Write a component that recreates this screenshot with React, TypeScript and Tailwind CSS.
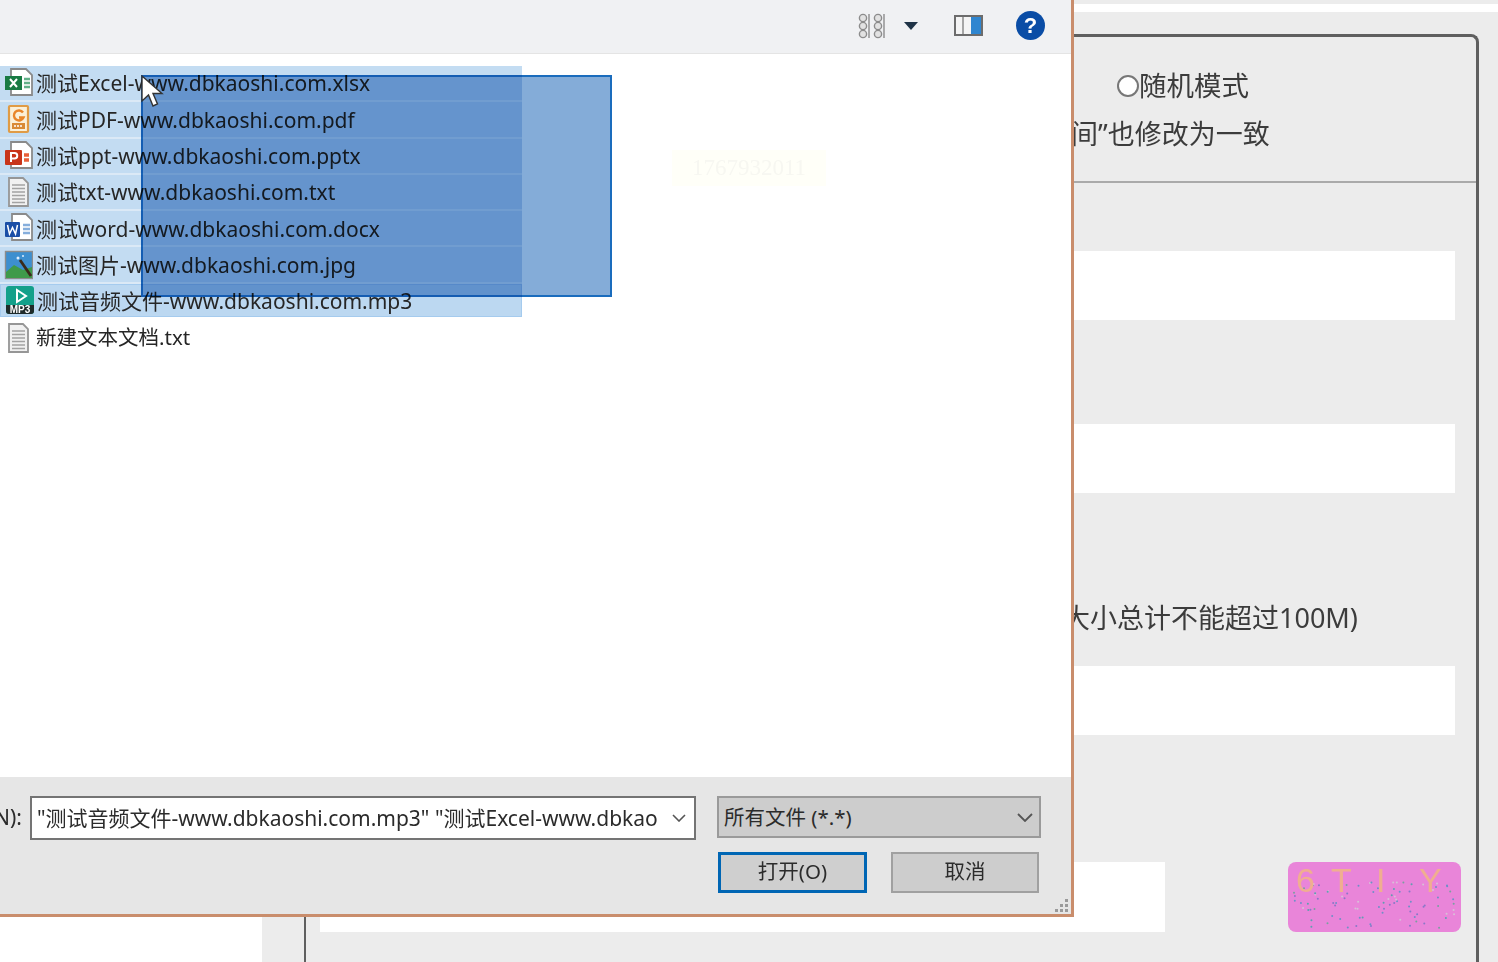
import React from "react";

const FONT = { fontFamily: '"Noto Sans", "Noto Sans CJK SC", sans-serif' };

function ExcelIcon() {
  return (
    <svg width="30" height="30" viewBox="0 0 30 30">
      <path d="M8 1h15l6 6v20h-21z" fill="#fff" stroke="#8a8a8a" strokeWidth="1.8" />
      <path d="M21 11h6M21 15h6M21 19h6" stroke="#62b089" strokeWidth="2.6" />
      <rect x="2" y="8" width="17" height="14" fill="#187a43" />
      <path d="M7 11l7 8M14 11l-7 8" stroke="#fff" strokeWidth="2" />
    </svg>
  );
}
function PdfIcon() {
  return (
    <svg width="30" height="30" viewBox="0 0 30 30">
      <rect x="6" y="2" width="19" height="26" rx="1" fill="#fbf0d8" stroke="#e09b45" strokeWidth="2.2" />
      <path d="M20 8.500a5 5 0 1 0 .5 5h-4.500" fill="none" stroke="#e9862a" strokeWidth="2.4" />
      <rect x="9" y="19" width="13" height="6" fill="#d98a35" />
      <path d="M11 22h9" stroke="#fff" strokeWidth="1.4" strokeDasharray="2 1" />
    </svg>
  );
}
function PptIcon() {
  return (
    <svg width="30" height="30" viewBox="0 0 30 30">
      <path d="M8 1h15l6 6v20h-21z" fill="#fff" stroke="#8a8a8a" strokeWidth="1.8" />
      <path d="M21 14h5M21 19h5" stroke="#e8603a" strokeWidth="3.4" />
      <rect x="2" y="9" width="17" height="15" rx="1" fill="#c8351a" />
      <path d="M8 21v-9h3.500a2.600 2.600 0 0 1 0 5.500h-3.500" fill="none" stroke="#fff" strokeWidth="2" />
    </svg>
  );
}
function TxtIcon() {
  return (
    <svg width="30" height="30" viewBox="0 0 30 30">
      <path d="M6 1h14l5 5v23h-19z" fill="#f1f1f1" stroke="#969696" strokeWidth="1.8" />
      <path d="M9 8h13M9 11.500h13M9 15h13M9 18.500h13M9 22h13M9 25.500h13" stroke="#a3a3a3" strokeWidth="1.5" />
    </svg>
  );
}
function WordIcon() {
  return (
    <svg width="30" height="30" viewBox="0 0 30 30">
      <path d="M9 1h14l6 6v20h-20z" fill="#fff" stroke="#8a8a8a" strokeWidth="1.8" />
      <path d="M20 12h7M20 16h7M20 20h7" stroke="#86aedc" strokeWidth="2.6" />
      <rect x="2" y="9" width="15" height="15" rx="1" fill="#1a4ea6" />
      <path d="M4.500 12l2 9 3-6.500 3 6.500 2-9" fill="none" stroke="#fff" strokeWidth="1.5" />
    </svg>
  );
}
function ImageIcon() {
  return (
    <svg width="30" height="30" viewBox="0 0 30 30">
      <rect x="2.500" y="1.500" width="27" height="27" fill="#3d8fcf" stroke="#8c8c8c" strokeWidth="1.4" />
      <path d="M3 22l8-7 9 5 9-3v11h-26z" fill="#3f9a4a" />
      <path d="M17 10l11 16" stroke="#3a2a1a" strokeWidth="2.800" />
      <circle cx="15" cy="8" r="1.500" fill="#dfefff" />
      <circle cx="20" cy="6" r="1" fill="#dfefff" />
    </svg>
  );
}
function Mp3Icon() {
  return (
    <svg width="30" height="30" viewBox="0 0 30 30">
      <rect x="2" y="1" width="28" height="28" rx="3" fill="#13a08a" />
      <path d="M13 5l9 6-9 6z" fill="none" stroke="#fff" strokeWidth="2" />
      <path d="M2 20h28v6a3 3 0 0 1-3 3h-22a3 3 0 0 1-3-3z" fill="#1f2a2a" />
      <text x="16" y="28" textAnchor="middle" fontSize="10" fontWeight="700" fill="#fff" fontFamily="Liberation Sans">MP3</text>
    </svg>
  );
}

const files: { name: string; icon: React.ReactNode }[] = [
  { name: "测试Excel-www.dbkaoshi.com.xlsx", icon: <ExcelIcon /> },
  { name: "测试PDF-www.dbkaoshi.com.pdf", icon: <PdfIcon /> },
  { name: "测试ppt-www.dbkaoshi.com.pptx", icon: <PptIcon /> },
  { name: "测试txt-www.dbkaoshi.com.txt", icon: <TxtIcon /> },
  { name: "测试word-www.dbkaoshi.com.docx", icon: <WordIcon /> },
  { name: "测试图片-www.dbkaoshi.com.jpg", icon: <ImageIcon /> },
  { name: "测试音频文件-www.dbkaoshi.com.mp3", icon: <Mp3Icon /> },
];

const dots: { x: number; y: number; c: string }[] = [];
let seed = 17;
const rnd = () => {
  seed = (seed * 16807) % 2147483647;
  return seed / 2147483647;
};
const dotColors = ["#6f8fc8", "#5f9fb0", "#8a78c8", "#d8c0d8", "#7aa0a0"];
for (let i = 0; i < 90; i++) {
  dots.push({ x: 6 + rnd() * 162, y: 20 + rnd() * 46, c: dotColors[Math.floor(rnd() * 5)] });
}

function Captcha() {
  return (
    <div className="relative w-[173px] h-[70px] -mr-[6px] rounded-lg bg-[#e985d9] overflow-hidden shrink-0">
      <svg className="absolute inset-0" width="173" height="70" viewBox="0 0 173 70">
        {dots.map((d, i) => (
          <circle key={i} cx={d.x} cy={d.y} r="1" fill={d.c} />
        ))}
      </svg>
      <div className="absolute inset-x-0 top-0 flex text-[34px] leading-[36px] text-[#f0ae90]" style={{ fontFamily: '"Liberation Sans", sans-serif' }}>
        <span className="ml-[8px] w-[33px]">6</span>
        <span className="ml-[2px] w-[45px]">T</span>
        <span className="w-[43px]">I</span>
        <span>Y</span>
      </div>
    </div>
  );
}

function Dialog() {
  return (
    <div className="absolute left-0 top-0 w-[1074px] h-[917px] bg-white border-r-[3px] border-b-[3px] border-[#c98d6c] flex flex-col">
      <div className="h-[54px] bg-[#f0f1f3] border-b border-[#e4e4e4] flex items-center justify-end pr-[26px] pb-[2px] shrink-0">
        <svg width="29" height="26" viewBox="0 0 29 26" className="mr-[17px]">
          <g fill="#e2e2e2" stroke="#8c8c8c" strokeWidth="1.400">
            <circle cx="5" cy="5" r="3.600" />
            <circle cx="5" cy="13" r="3.600" />
            <circle cx="5" cy="21" r="3.600" />
            <circle cx="20" cy="5" r="3.600" />
            <circle cx="20" cy="13" r="3.600" />
            <circle cx="20" cy="21" r="3.600" />
            <path d="M11 1v24M26 1v24" />
          </g>
        </svg>
        <svg width="14" height="8" viewBox="0 0 14 8" className="mr-[36px]">
          <path d="M0 0h14l-7 8z" fill="#1f3346" />
        </svg>
        <svg width="29" height="21" viewBox="0 0 29 21" className="mr-[33px]">
          <rect x="1" y="1" width="27" height="19" fill="#f4f4f4" stroke="#6c6c6c" strokeWidth="2" />
          <rect x="17" y="2" width="10" height="17" fill="#2f86d0" />
          <rect x="8" y="2" width="2" height="17" fill="#a5a5a5" />
        </svg>
        <div className="w-[29px] h-[29px] rounded-full bg-[#0a4da6] flex items-center justify-center text-white text-[22px] font-bold leading-none" style={{ fontFamily: '"Liberation Sans", sans-serif' }}>
          ?
        </div>
      </div>

      <div className="relative flex-1 pt-[12px] text-[21px] text-[#262626]" style={FONT}>
        <div className="flex flex-col">
          {files.map((f, i) => (
            <div
              key={f.name}
              className={
                i === files.length - 1
                  ? "w-[522px] h-[33px] mb-[3px] bg-[#bcd8f1] border border-[#a5cbee] flex items-center shrink-0"
                  : "w-[522px] h-[36.3px] bg-[#c3dcf2] border-b-2 border-[#dbe9f6] flex items-center shrink-0"
              }
            >
              <span className="w-[36px] pl-[3px] flex items-center shrink-0">{f.icon}</span>
              <span className="whitespace-nowrap pt-[2px]">{f.name}</span>
            </div>
          ))}
          <div className="w-[522px] h-[36px] flex items-center">
            <span className="w-[36px] pl-[3px] flex items-center shrink-0">
              <TxtIcon />
            </span>
            <span className="whitespace-nowrap text-[20.5px]">新建文本文档.txt</span>
          </div>
        </div>

        <div className="absolute left-[672px] top-[96px] w-[154px] h-[36px] bg-[#fffff8] flex items-center justify-center text-[23px] text-[#f7f7f1]" style={{ fontFamily: '"Liberation Serif", serif' }}>
          1767932011
        </div>

        <div className="absolute left-[141px] top-[21px] w-[471px] h-[222px] bg-[#84acd8] mix-blend-multiply border-2 border-[#1a6cbd]" />

        <svg className="absolute left-[140px] top-[21px]" width="26" height="36" viewBox="0 0 26 36">
          <path d="M2 1v25l6.500-6 4.500 11 4.500-2-4.500-10.500h9z" fill="#fff" stroke="#333" strokeWidth="1.400" />
        </svg>
      </div>

      <div className="relative h-[137px] bg-[#e6e6e6] shrink-0 text-[21px] text-[#2b2b2b]" style={FONT}>
        <div className="flex items-start pt-[19px]">
          <span className="w-[30px] h-[43px] flex items-center justify-end pr-[8px] whitespace-nowrap">N):</span>
          <div className="w-[666px] h-[44px] bg-white border-2 border-[#747474] flex items-center pl-[5px] pr-[8px] overflow-hidden">
            <span className="flex-1 overflow-hidden whitespace-nowrap pt-[2px]">"测试音频文件-www.dbkaoshi.com.mp3" "测试Excel-www.dbkao</span>
            <svg width="14" height="8" viewBox="0 0 14 8" className="ml-[4px] shrink-0">
              <path d="M1 1l6 6 6-6" fill="none" stroke="#555" strokeWidth="1.600" />
            </svg>
          </div>
          <div className="ml-[21px] w-[324px] h-[42px] bg-[#cdcdcd] border-2 border-[#9a9a9a] flex items-center justify-between pl-[5px] pr-[6px] text-[20.5px]">
            <span>所有文件 (*.*)</span>
            <svg width="16" height="9" viewBox="0 0 16 9">
              <path d="M1 1l7 7 7-7" fill="none" stroke="#555" strokeWidth="1.800" />
            </svg>
          </div>
        </div>
        <div className="flex pl-[718px] pt-[12px] gap-[24px] text-[20.5px]">
          <div className="w-[149px] h-[41px] bg-[#cfcfcf] border-[3px] border-[#0066b4] flex items-center justify-center pb-[2px]">打开(O)</div>
          <div className="w-[148px] h-[41px] bg-[#cdcdcd] border-2 border-[#a0a0a0] flex items-center justify-center pb-[2px]">取消</div>
        </div>
        <svg className="absolute right-[2px] bottom-[1px]" width="18" height="16" viewBox="0 0 18 16">
          <g fill="#9a9a9a">
            <rect x="14" y="2" width="3" height="3" />
            <rect x="9" y="7" width="3" height="3" />
            <rect x="14" y="7" width="3" height="3" />
            <rect x="4" y="12" width="3" height="3" />
            <rect x="9" y="12" width="3" height="3" />
            <rect x="14" y="12" width="3" height="3" />
          </g>
        </svg>
      </div>
    </div>
  );
}

export default function App() {
  return (
    <div className="relative w-[1498px] h-[962px] overflow-hidden flex bg-white blur-[0.5px]" style={FONT}>
      <div className="w-[262px] bg-white shrink-0" />
      <div className="flex-1 bg-[#ececec] flex flex-col">
        <div className="h-[4px] shrink-0" />
        <div className="h-[8px] bg-white shrink-0" />
        <div className="ml-[42px] mr-[19px] mt-[22px] flex-1 border-l-2 border-r-[3px] border-t-[3px] border-[#5f5f5f] rounded-tr-lg flex flex-col text-[#3c3c3c] text-[27px]">
          <div className="h-[146px] shrink-0 border-b-2 border-[#aaaaaa] flex flex-col">
            <div className="flex items-center pl-[811px] pt-[30px] h-[68px] shrink-0">
              <span className="w-[22px] h-[22px] rounded-full border-2 border-[#777] bg-white shrink-0" />
              <span className="text-[27.5px]">随机模式</span>
            </div>
            <div className="pl-[765px] pt-[5px] leading-[48px] whitespace-nowrap">间”也修改为一致</div>
          </div>
          <div className="flex flex-col pl-[14px] pr-[21px]">
            <div className="h-[69px] bg-white mt-[68px] shrink-0" />
            <div className="h-[69px] bg-white mt-[104px] shrink-0" />
            <div className="mt-[101px] h-[48px] flex items-center pl-[743px] whitespace-nowrap">大小总计不能超过100M)</div>
            <div className="h-[69px] bg-white mt-[24px] shrink-0" />
            <div className="flex justify-between mt-[127px] items-start">
              <div className="w-[845px] h-[70px] bg-white shrink-0" />
              <Captcha />
            </div>
          </div>
        </div>
      </div>
      <Dialog />
    </div>
  );
}
